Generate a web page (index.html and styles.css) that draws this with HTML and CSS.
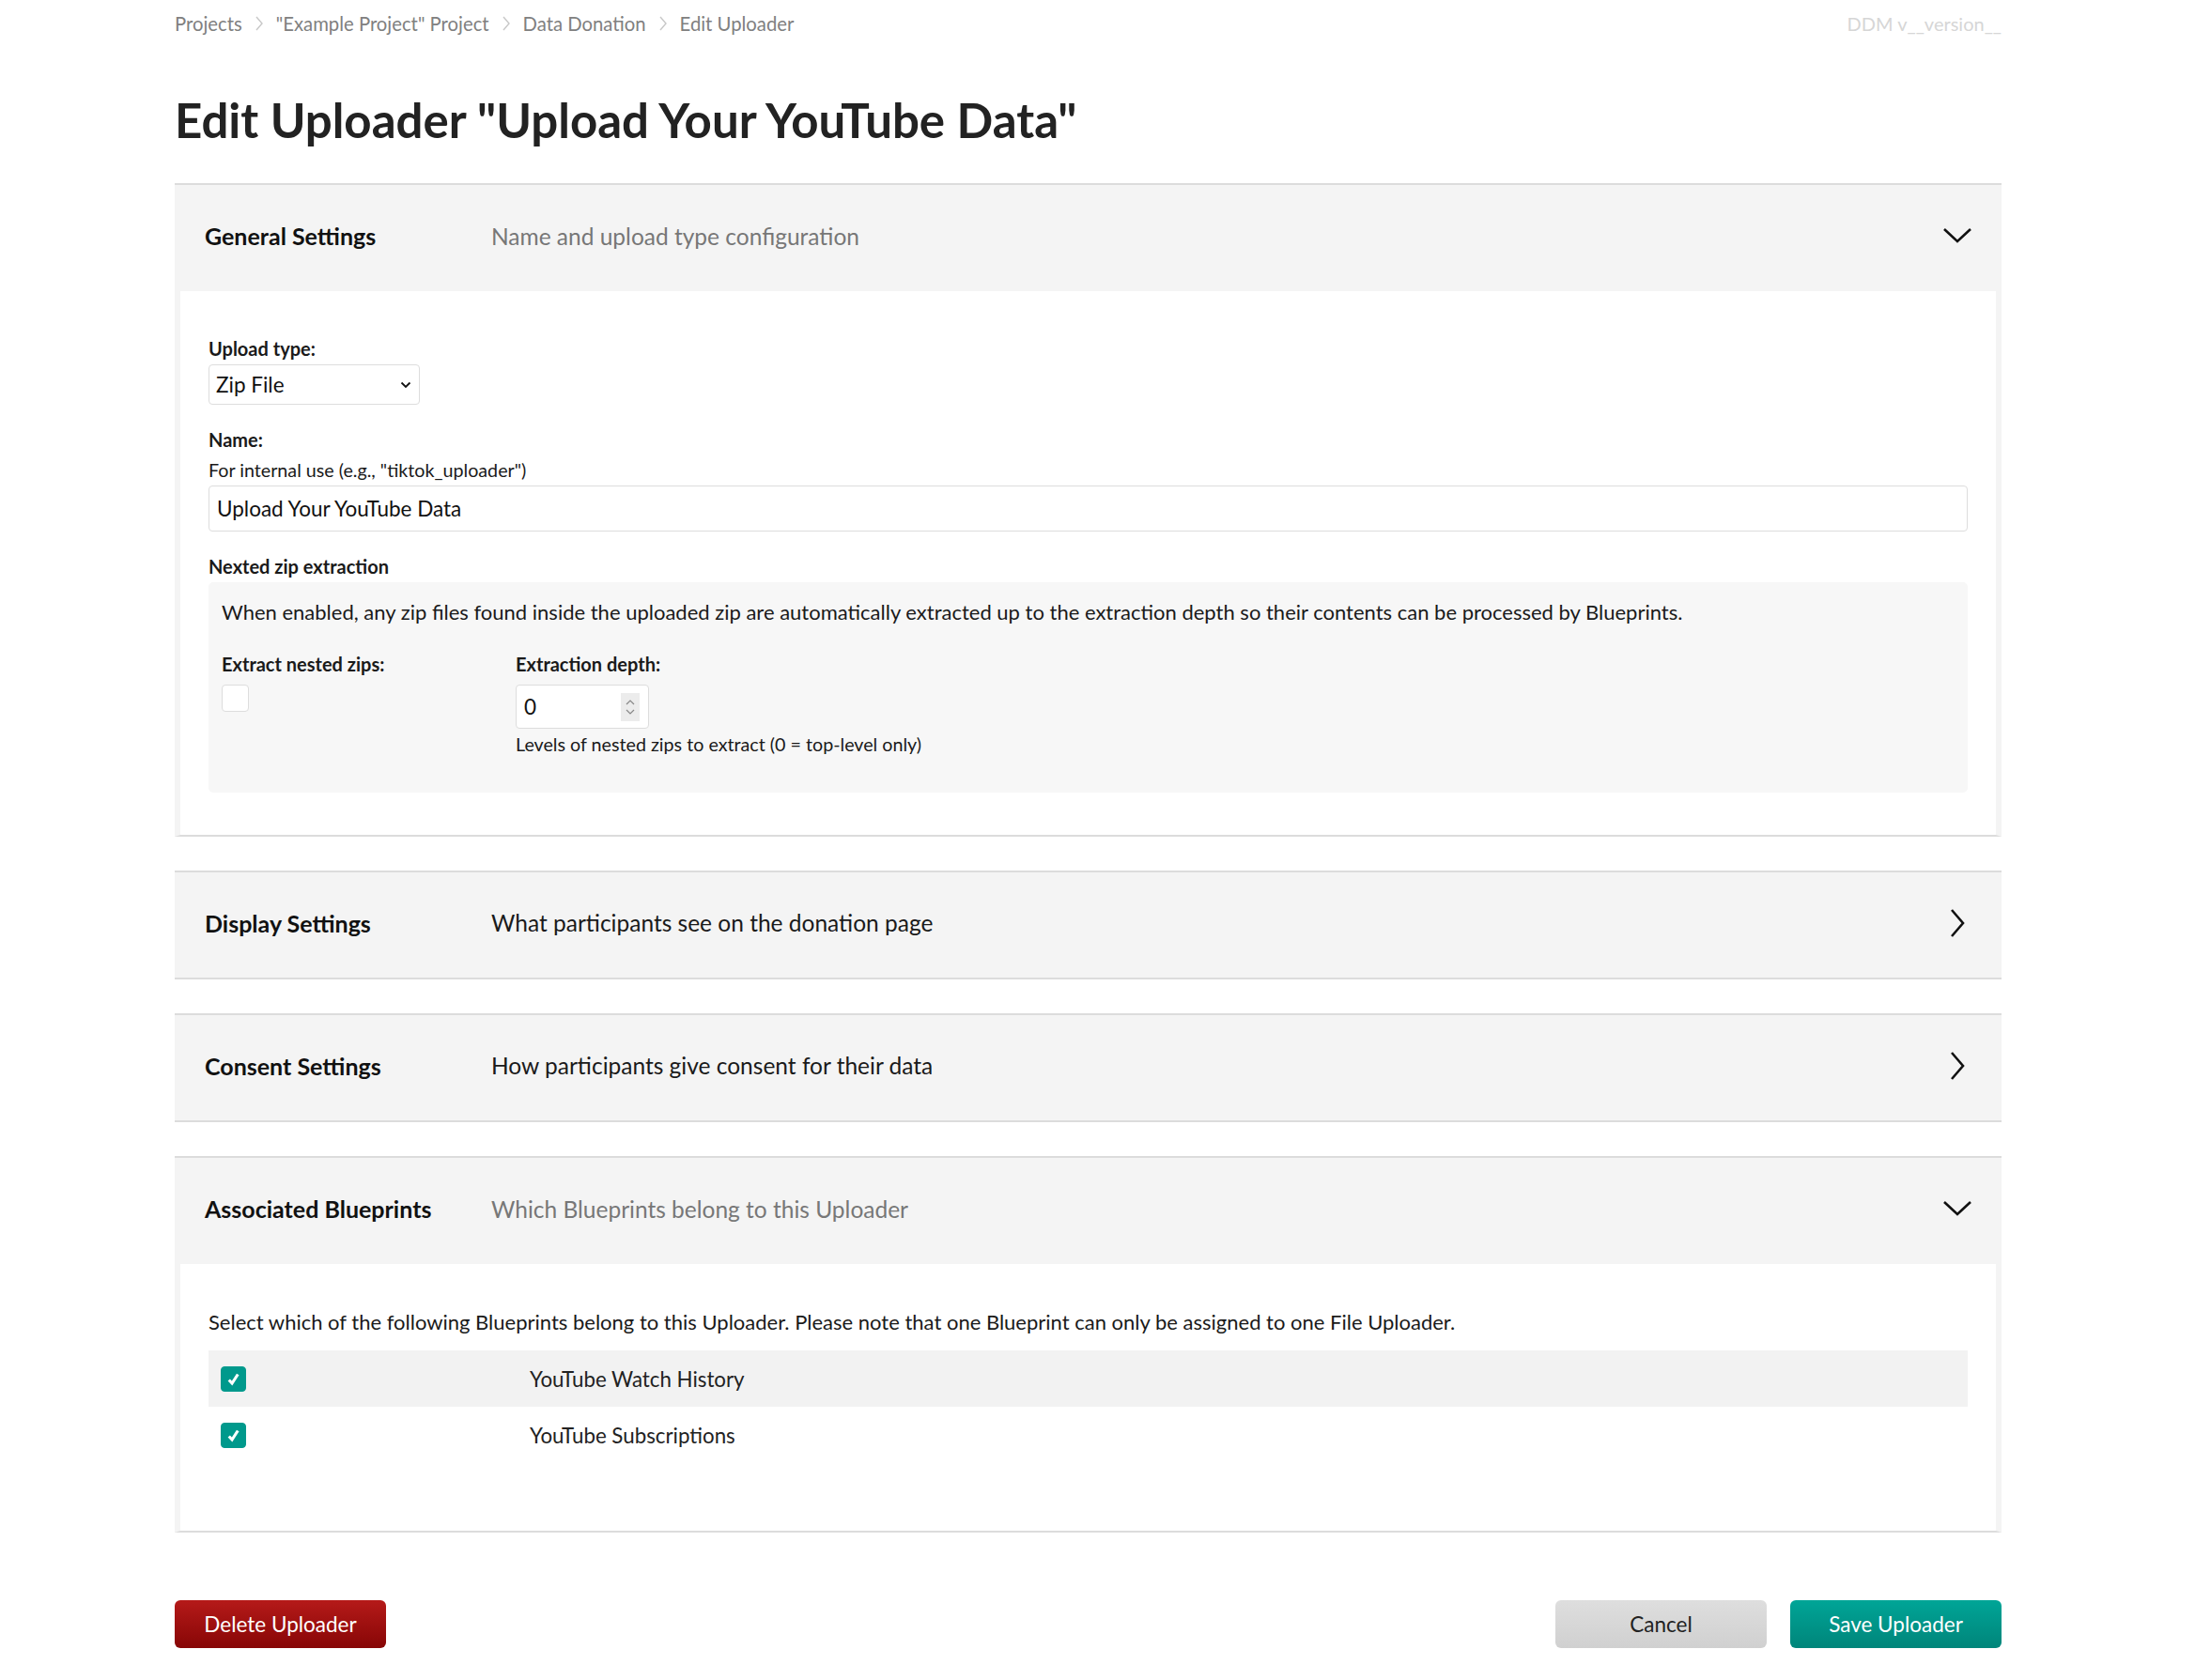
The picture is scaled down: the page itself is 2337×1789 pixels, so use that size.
FILE: index.html
```html
<!DOCTYPE html>
<html lang="en">
<head>
<meta charset="utf-8">
<title>Edit Uploader</title>
<link rel="stylesheet" href="styles.css">
</head>
<body>
<div class="page">
  <header class="topbar">
    <nav class="crumbs">
      <span class="crumb">Projects</span>
      <svg class="sep" viewBox="0 0 10 20" width="10" height="20"><path d="M2 3 L8 10 L2 17" fill="none" stroke="#c8c8c8" stroke-width="1.4"/></svg>
      <span class="crumb">"Example Project" Project</span>
      <svg class="sep" viewBox="0 0 10 20" width="10" height="20"><path d="M2 3 L8 10 L2 17" fill="none" stroke="#c8c8c8" stroke-width="1.4"/></svg>
      <span class="crumb">Data Donation</span>
      <svg class="sep" viewBox="0 0 10 20" width="10" height="20"><path d="M2 3 L8 10 L2 17" fill="none" stroke="#c8c8c8" stroke-width="1.4"/></svg>
      <span class="crumb">Edit Uploader</span>
    </nav>
    <span class="version">DDM v__version__</span>
  </header>

  <h1 class="title">Edit Uploader "Upload Your YouTube Data"</h1>

  <section class="acc open">
    <div class="acc-head">
      <span class="acc-title">General Settings</span>
      <span class="acc-desc muted">Name and upload type configuration</span>
      <svg class="chev" viewBox="0 0 32 18" width="32" height="18"><path d="M2 2 L16 15 L30 2" fill="none" stroke="#111" stroke-width="2.6"/></svg>
    </div>
    <div class="acc-body">
      <div class="field">
        <label class="lbl">Upload type:</label>
        <div class="select">
          <span>Zip File</span>
          <svg viewBox="0 0 12 8" width="12" height="8"><path d="M1.5 1.5 L6 6 L10.5 1.5" fill="none" stroke="#111" stroke-width="1.8"/></svg>
        </div>
      </div>
      <div class="field">
        <label class="lbl">Name:</label>
        <div class="help">For internal use (e.g., "tiktok_uploader")</div>
        <div class="input">Upload Your YouTube Data</div>
      </div>
      <div class="field">
        <label class="lbl">Nexted zip extraction</label>
        <div class="panel">
          <p class="panel-text">When enabled, any zip files found inside the uploaded zip are automatically extracted up to the extraction depth so their contents can be processed by Blueprints.</p>
          <div class="panel-row">
            <div class="panel-col first">
              <label class="lbl">Extract nested zips:</label>
              <span class="cb"></span>
            </div>
            <div class="panel-col">
              <label class="lbl">Extraction depth:</label>
              <div class="number">
                <span>0</span>
                <span class="spin">
                  <svg viewBox="0 0 10 6" width="10" height="6"><path d="M1 5 L5 1 L9 5" fill="none" stroke="#888" stroke-width="1.2"/></svg>
                  <svg viewBox="0 0 10 6" width="10" height="6"><path d="M1 1 L5 5 L9 1" fill="none" stroke="#888" stroke-width="1.2"/></svg>
                </span>
              </div>
              <div class="help">Levels of nested zips to extract (0 = top-level only)</div>
            </div>
          </div>
        </div>
      </div>
    </div>
  </section>

  <section class="acc">
    <div class="acc-head">
      <span class="acc-title">Display Settings</span>
      <span class="acc-desc">What participants see on the donation page</span>
      <svg class="chev right" viewBox="0 0 18 32" width="18" height="32"><path d="M3 2 L15 16 L3 30" fill="none" stroke="#111" stroke-width="2.6"/></svg>
    </div>
  </section>

  <section class="acc">
    <div class="acc-head">
      <span class="acc-title">Consent Settings</span>
      <span class="acc-desc">How participants give consent for their data</span>
      <svg class="chev right" viewBox="0 0 18 32" width="18" height="32"><path d="M3 2 L15 16 L3 30" fill="none" stroke="#111" stroke-width="2.6"/></svg>
    </div>
  </section>

  <section class="acc open">
    <div class="acc-head">
      <span class="acc-title">Associated Blueprints</span>
      <span class="acc-desc muted">Which Blueprints belong to this Uploader</span>
      <svg class="chev" viewBox="0 0 32 18" width="32" height="18"><path d="M2 2 L16 15 L30 2" fill="none" stroke="#111" stroke-width="2.6"/></svg>
    </div>
    <div class="acc-body bp-body">
      <p class="body-text">Select which of the following Blueprints belong to this Uploader. Please note that one Blueprint can only be assigned to one File Uploader.</p>
      <div class="bp-list">
        <div class="bp-row alt">
          <span class="cb checked"><svg viewBox="0 0 16 16" width="19" height="19"><path d="M4 8.8 L6.8 11.8 L12 3.8" fill="none" stroke="#fff" stroke-width="2.6"/></svg></span>
          <span class="bp-name">YouTube Watch History</span>
        </div>
        <div class="bp-row">
          <span class="cb checked"><svg viewBox="0 0 16 16" width="19" height="19"><path d="M4 8.8 L6.8 11.8 L12 3.8" fill="none" stroke="#fff" stroke-width="2.6"/></svg></span>
          <span class="bp-name">YouTube Subscriptions</span>
        </div>
      </div>
    </div>
  </section>

  <footer class="actions">
    <button class="btn danger">Delete Uploader</button>
    <div class="actions-right">
      <button class="btn neutral">Cancel</button>
      <button class="btn primary">Save Uploader</button>
    </div>
  </footer>
</div>
</body>
</html>
```

FILE: styles.css
```css
* { box-sizing: border-box; }
html, body { margin: 0; padding: 0; background: #fff; }
body {
  font-family: Lato, "Noto Sans", "Liberation Sans", sans-serif;
  color: #222;
  font-size: 22px;
}
.page {
  padding: 0 206px 0 186px;
}
.topbar {
  height: 50px;
  display: flex;
  align-items: center;
  justify-content: space-between;
}
.crumbs {
  display: flex;
  align-items: center;
  gap: 13px;
  color: #808080;
  font-size: 20.3px;
}
.sep { display: block; }
.version {
  color: #d6d6d6;
  font-size: 20px;
}
.title {
  margin: 50px 0 40px;
  font-size: 51px;
  line-height: 55px;
  font-weight: 700;
  color: #222;
}
.acc {
  margin-bottom: 36px;
}
.acc-head {
  display: flex;
  align-items: center;
  height: 116px;
  background: #f4f4f4;
  border-top: 2px solid #dcdcdc;
  border-bottom: 2px solid #dcdcdc;
  padding: 0 31px 5px 32px;
}
.acc.open .acc-head { border-bottom: none; height: 115px; }
.acc-title {
  width: 305px;
  font-weight: 700;
  font-size: 25px;
  color: #111;
}
.acc-desc {
  flex: 1;
  font-size: 24.5px;
  color: #1a1a1a;
}
.acc-desc.muted { color: #777; }
.chev { display: block; }
.chev.right { margin-right: 7px; }
.acc-body {
  border-left: 6px solid #f4f4f4;
  border-right: 6px solid #f4f4f4;
  border-bottom: 2px solid #dcdcdc;
  padding: 49px 30px 45px 30px;
}
.field { margin-bottom: 25px; }
.field:last-child { margin-bottom: 0; }
.lbl {
  display: block;
  font-weight: 700;
  font-size: 20px;
  line-height: 24px;
  color: #1a1a1a;
  margin-bottom: 5px;
}
.help {
  font-size: 19.7px;
  line-height: 24px;
  color: #1a1a1a;
  margin-bottom: 4px;
}
.field .help { margin-top: 9px; }
.panel-col .help { margin-top: 0; }
.select {
  width: 225px;
  height: 43px;
  border: 1px solid #ddd;
  border-radius: 4px;
  display: flex;
  align-items: center;
  justify-content: space-between;
  padding: 0 8px 0 7px;
  font-size: 22.5px;
  color: #111;
}
.input {
  height: 49px;
  border: 1px solid #ddd;
  border-radius: 4px;
  display: flex;
  align-items: center;
  padding: 0 8px;
  font-size: 22.5px;
  color: #111;
}
.panel {
  background: #f7f7f7;
  border-radius: 5px;
  padding: 19px 14px 35px;
}
.panel-text {
  margin: 0 0 30px;
  font-size: 22px;
  line-height: 26px;
  color: #1a1a1a;
}
.panel-row { display: flex; }
.panel-col.first { width: 313px; }
.panel-col .lbl { margin-bottom: 10px; }
.cb {
  display: flex;
  align-items: center;
  justify-content: center;
  width: 29px;
  height: 29px;
  border: 1px solid #ddd;
  border-radius: 4px;
  background: #fff;
}
.cb.checked {
  background: #00998c;
  border-color: #00998c;
  width: 27px;
  height: 27px;
}
.cb svg { display: block; }
.number {
  width: 142px;
  height: 47px;
  border: 1px solid #ddd;
  border-radius: 4px;
  background: #fff;
  display: flex;
  align-items: center;
  justify-content: space-between;
  padding: 0 9px 0 8px;
  font-size: 22.5px;
  color: #111;
  margin-bottom: 5px;
}
.spin {
  display: flex;
  flex-direction: column;
  align-items: center;
  justify-content: center;
  gap: 4px;
  width: 20px;
  height: 30px;
  background: #ececec;
}
.spin svg { display: block; }
.body-text {
  margin: 0 0 17px;
  font-size: 22px;
  line-height: 26px;
  color: #1a1a1a;
}
.bp-body { padding-bottom: 72px; }
.bp-row {
  display: flex;
  align-items: center;
  height: 60px;
  padding-left: 13px;
}
.bp-row.alt { background: #f2f2f2; }
.bp-row .cb { margin-right: 302px; }
.bp-name {
  font-size: 22.3px;
  color: #222;
}
.actions {
  display: flex;
  justify-content: space-between;
  margin-top: 72px;
  padding-bottom: 35px;
}
.actions-right { display: flex; gap: 25px; }
.btn {
  width: 225px;
  height: 51px;
  border: none;
  border-radius: 6px;
  font-family: inherit;
  font-size: 22.5px;
  cursor: pointer;
}
.btn.danger {
  background: linear-gradient(#b51a19, #870606);
  color: #fff;
}
.btn.neutral {
  background: linear-gradient(#dedede, #d0d0d0);
  color: #222;
}
.btn.primary {
  background: linear-gradient(#00a597, #00857a);
  color: #fff;
}
```
